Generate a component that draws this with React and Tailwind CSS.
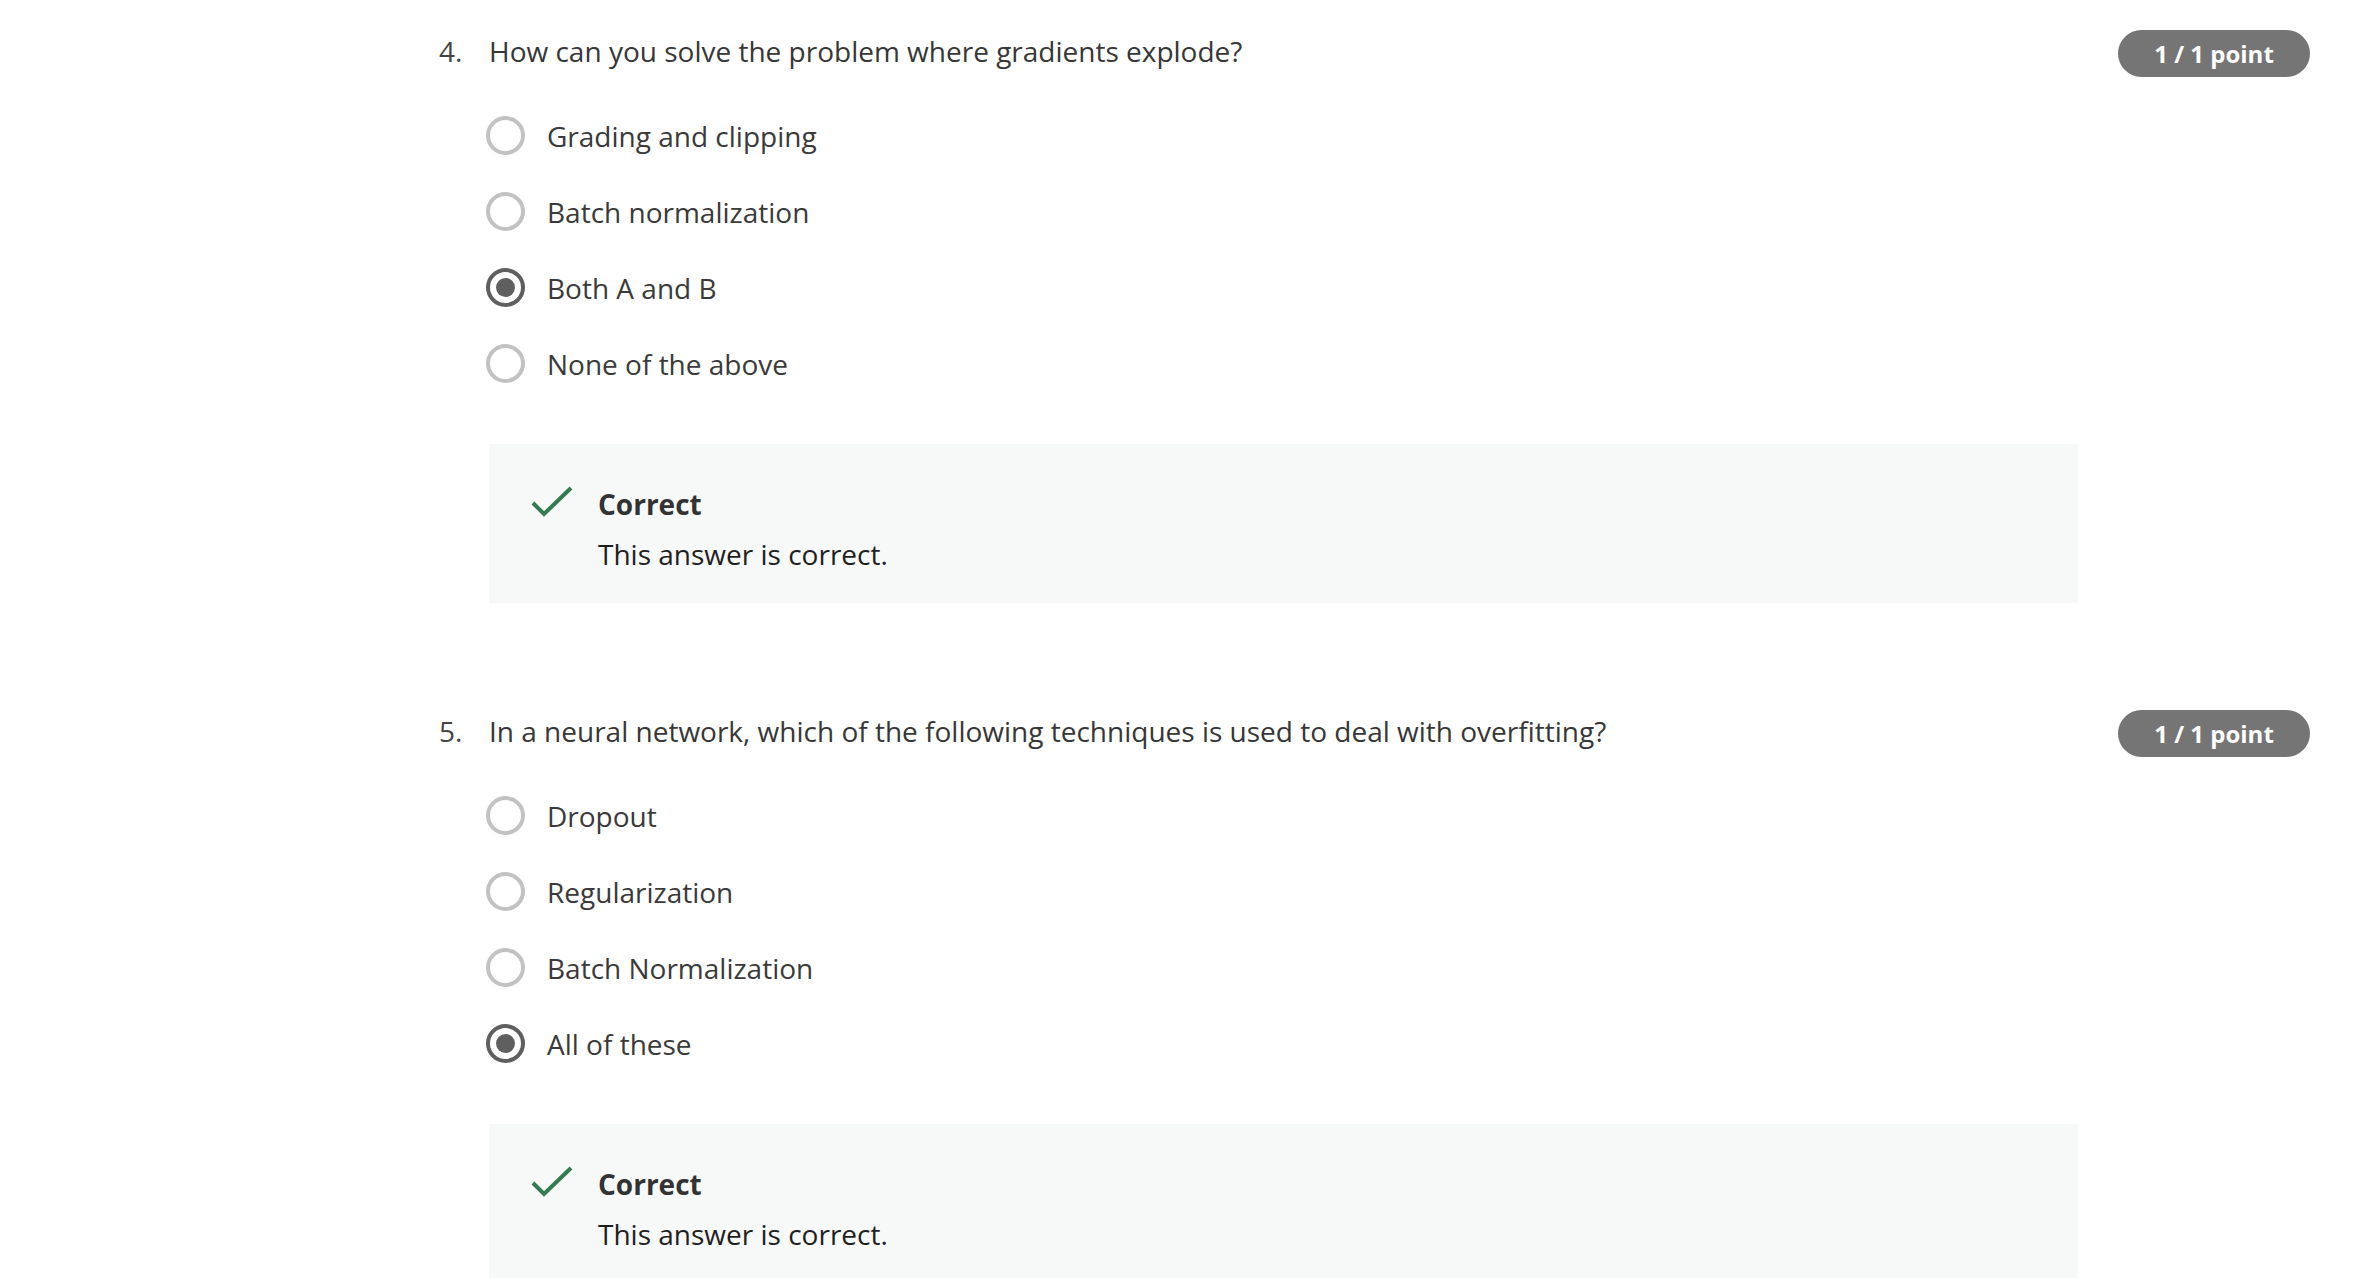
import React from 'react';

const QUESTIONS = [
  {
    number: '4.',
    text: 'How can you solve the problem where gradients explode?',
    options: ['Grading and clipping', 'Batch normalization', 'Both A and B', 'None of the above'],
    selected: 2,
  },
  {
    number: '5.',
    text: 'In a neural network, which of the following techniques is used to deal with overfitting?',
    options: ['Dropout', 'Regularization', 'Batch Normalization', 'All of these'],
    selected: 3,
  },
];

// Radio circle, filled when selected
const Radio = ({ checked }) => (
  <span
    className={`flex h-[39px] w-[39px] shrink-0 items-center justify-center rounded-full border-4 ${
      checked ? 'border-[#5f5f5f]' : 'border-[#c2c2c2]'
    }`}
  >
    {checked && <span className="h-[19px] w-[19px] rounded-full bg-[#5f5f5f]" />}
  </span>
);

const CheckIcon = () => (
  <svg width="44" height="34" viewBox="0 0 44 34" className="mt-[2px] shrink-0">
    <path d="M3 18 L14 29 L41 3" fill="none" stroke="#347b50" strokeWidth="4" />
  </svg>
);

const Feedback = () => (
  <div className="mt-[61px] flex h-[159px] bg-[#f7f9f8] pl-[41px] pt-[39px]">
    <CheckIcon />
    <div className="ml-[24px]">
      <p className="text-[28px] leading-[42px] font-bold text-[#333333]">Correct</p>
      <p className="mt-[8px] text-[28px] leading-[42px] text-[#1f1f1f]">This answer is correct.</p>
    </div>
  </div>
);

const Question = ({ number, text, options, selected, first }) => (
  <div className={`flex ${first ? '' : 'mt-[107px]'}`}>
    <div className="w-[50px] shrink-0 text-[28px] leading-[42px] text-[#444444]">{number}</div>
    <div className="flex-1">
      <p className="text-[28px] leading-[42px] text-[#373737]">{text}</p>
      <div className="mt-[44px] flex flex-col gap-[37px]">
        {options.map((opt, i) => (
          <label key={opt} className="flex h-[39px] items-center gap-[22px] -ml-[3px]">
            <Radio checked={i === selected} />
            <span className="text-[28px] leading-[42px] text-[#3a3a3a]">{opt}</span>
          </label>
        ))}
      </div>
      <Feedback />
    </div>
    <div className="ml-[40px] w-[192px] shrink-0">
      <span className="flex h-[47px] items-center justify-center rounded-full bg-[#757575] text-[24px] font-bold text-white">
        1 / 1 point
      </span>
    </div>
  </div>
);

export default function App() {
  return (
    <div
      className="min-h-screen bg-white pl-[439px] pr-[62px] pt-[30px]"
      style={{ fontFamily: '"Open Sans", sans-serif' }}
    >
      {QUESTIONS.map((q, i) => (
        <Question key={q.number} {...q} first={i === 0} />
      ))}
    </div>
  );
}
